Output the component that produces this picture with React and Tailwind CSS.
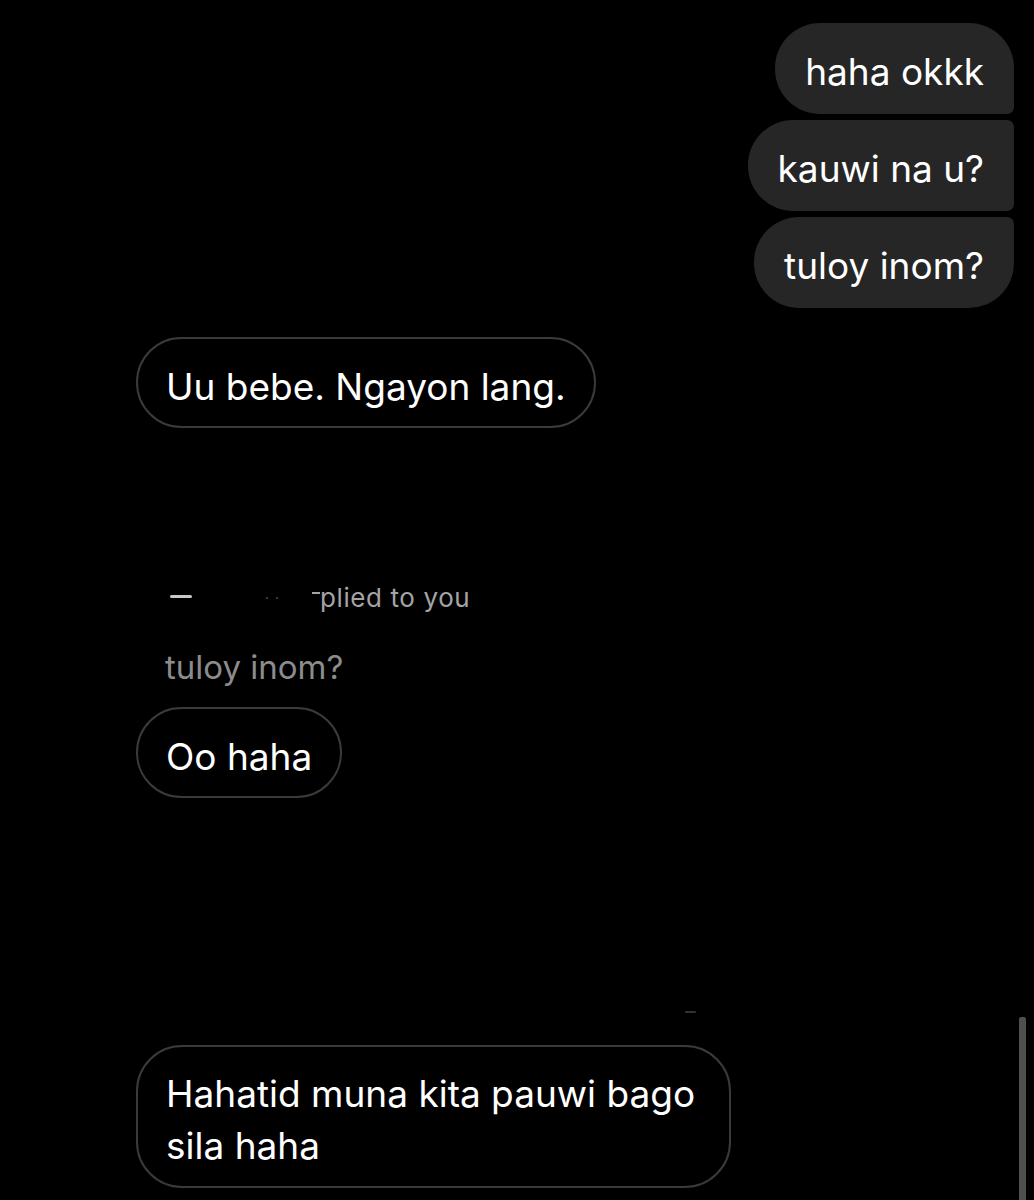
export default function App() {
  const font = { fontFamily: 'Inter, "Noto Sans", sans-serif' };
  return (
    <div
      className="relative w-full h-[1200px] bg-black overflow-hidden flex flex-col text-white"
      style={font}
    >
      {/* sent group */}
      <div className="flex flex-col items-end gap-[6px] pt-[23px] pr-[20px]">
        <div className="bg-[#262626] px-[30px] pt-[23px] pb-[16px] text-[37px] leading-[52px] rounded-l-[45px] rounded-tr-[45px] rounded-br-[7px]">
          haha okkk
        </div>
        <div className="bg-[#262626] px-[30px] pt-[23px] pb-[16px] text-[37px] leading-[52px] rounded-l-[45px] rounded-r-[7px]">
          kauwi na u?
        </div>
        <div className="bg-[#262626] px-[30px] pt-[23px] pb-[16px] text-[37px] leading-[52px] rounded-l-[45px] rounded-tr-[7px] rounded-br-[45px]">
          tuloy inom?
        </div>
      </div>

      {/* received */}
      <div className="flex flex-col items-start pl-[136px]">
        <div className="mt-[29px] border-2 border-[#3a3a3a] rounded-full px-[28px] pt-[22px] pb-[13px] text-[37px] leading-[52px]">
          Uu bebe. Ngayon lang.
        </div>

        <div className="mt-[155px] h-[30px] flex items-center pl-[34px] text-[26px] leading-[30px] tracking-[0.6px] text-[#a4a4a4]">
          <span className="w-[22px] h-[3px] rounded-full bg-[#c8c8c8] -translate-y-[2px]" />
          <span className="ml-[74px] w-[2px] h-[2px] bg-[#3a3a3a]" />
          <span className="ml-[8px] w-[2px] h-[2px] bg-[#3a3a3a]" />
          <span className="ml-[34px] w-[8px] h-[2px] bg-[#a4a4a4] -translate-y-[5px]" />
          <span>plied to you</span>
        </div>

        <div className="mt-[28px] pl-[29px] text-[33px] leading-[52px] text-[#8c8c8c]">
          tuloy inom?
        </div>

        <div className="mt-[14px] border-2 border-[#3a3a3a] rounded-full px-[28px] pt-[22px] pb-[13px] text-[37px] leading-[52px]">
          Oo haha
        </div>

        <div className="mt-[213px] ml-[549px] w-[11px] h-[2px] rounded-full bg-[#333333]" />

        <div className="mt-[32px] max-w-[595px] border-2 border-[#3a3a3a] rounded-[46px] px-[28px] pt-[21px] pb-[14px] text-[37px] leading-[52px]">
          Hahatid muna kita pauwi bago sila haha
        </div>
      </div>

      {/* scrollbar overlay */}
      <div className="absolute left-[1019px] top-[1017px] w-[7px] h-[190px] rounded-[2px] bg-[#4f4f4f]" />
    </div>
  );
}
